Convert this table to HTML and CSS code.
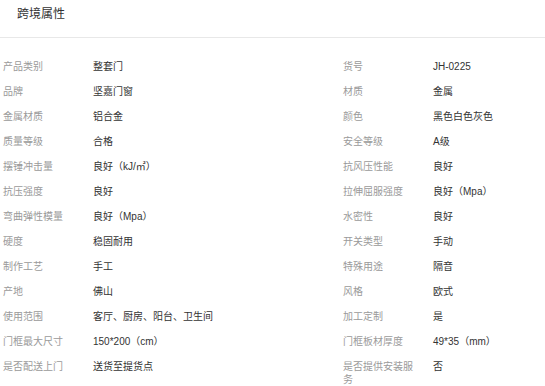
FILE: index.html
```html
<!DOCTYPE html>
<html lang="zh-CN">
<head>
<meta charset="utf-8">
<title>跨境属性</title>
<link rel="stylesheet" href="styles.css">
</head>
<body>
<div class="panel">
  <div class="panel-head"><span class="panel-title">跨境属性</span></div>
  <div class="attr-grid">
    <div class="attr"><span class="attr-label">产品类别</span><span class="attr-value">整套门</span></div>
    <div class="attr"><span class="attr-label">货号</span><span class="attr-value">JH-0225</span></div>
    <div class="attr"><span class="attr-label">品牌</span><span class="attr-value">坚嘉门窗</span></div>
    <div class="attr"><span class="attr-label">材质</span><span class="attr-value">金属</span></div>
    <div class="attr"><span class="attr-label">金属材质</span><span class="attr-value">铝合金</span></div>
    <div class="attr"><span class="attr-label">颜色</span><span class="attr-value">黑色白色灰色</span></div>
    <div class="attr"><span class="attr-label">质量等级</span><span class="attr-value">合格</span></div>
    <div class="attr"><span class="attr-label">安全等级</span><span class="attr-value">A级</span></div>
    <div class="attr"><span class="attr-label">摆锤冲击量</span><span class="attr-value">良好（kJ/㎡）</span></div>
    <div class="attr"><span class="attr-label">抗风压性能</span><span class="attr-value">良好</span></div>
    <div class="attr"><span class="attr-label">抗压强度</span><span class="attr-value">良好</span></div>
    <div class="attr"><span class="attr-label">拉伸屈服强度</span><span class="attr-value">良好（Mpa）</span></div>
    <div class="attr"><span class="attr-label">弯曲弹性模量</span><span class="attr-value">良好（Mpa）</span></div>
    <div class="attr"><span class="attr-label">水密性</span><span class="attr-value">良好</span></div>
    <div class="attr"><span class="attr-label">硬度</span><span class="attr-value">稳固耐用</span></div>
    <div class="attr"><span class="attr-label">开关类型</span><span class="attr-value">手动</span></div>
    <div class="attr"><span class="attr-label">制作工艺</span><span class="attr-value">手工</span></div>
    <div class="attr"><span class="attr-label">特殊用途</span><span class="attr-value">隔音</span></div>
    <div class="attr"><span class="attr-label">产地</span><span class="attr-value">佛山</span></div>
    <div class="attr"><span class="attr-label">风格</span><span class="attr-value">欧式</span></div>
    <div class="attr"><span class="attr-label">使用范围</span><span class="attr-value">客厅、厨房、阳台、卫生间</span></div>
    <div class="attr"><span class="attr-label">加工定制</span><span class="attr-value">是</span></div>
    <div class="attr"><span class="attr-label">门框最大尺寸</span><span class="attr-value">150*200（cm）</span></div>
    <div class="attr"><span class="attr-label">门框板材厚度</span><span class="attr-value">49*35（mm）</span></div>
    <div class="attr"><span class="attr-label">是否配送上门</span><span class="attr-value">送货至提货点</span></div>
    <div class="attr"><span class="attr-label">是否提供安装服务</span><span class="attr-value">否</span></div>
  </div>
</div>
</body>
</html>
```

FILE: styles.css
```css
html, body {
  margin: 0;
  padding: 0;
  background: #fff;
}

body {
  font-family: "Liberation Sans", "Noto Sans CJK SC", sans-serif;
  color: #333;
  overflow: hidden;
}

.panel-head {
  height: 38px;
  box-sizing: border-box;
  padding: 4px 0 0 17px;
  border-bottom: 1px solid #e8e8e8;
}

.panel-title {
  font-size: 12px;
  line-height: 16px;
  color: #333;
}

.attr-grid {
  display: grid;
  grid-template-columns: 340px 1fr;
  row-gap: 12px;
  padding: 22px 0 0 3px;
}

.attr {
  display: flex;
  align-items: flex-start;
  font-size: 10px;
  line-height: 13px;
}

.attr-label {
  flex: 0 0 78px;
  margin-right: 12px;
  color: #9a9a9a;
}

.attr-value {
  color: #333;
}
```
